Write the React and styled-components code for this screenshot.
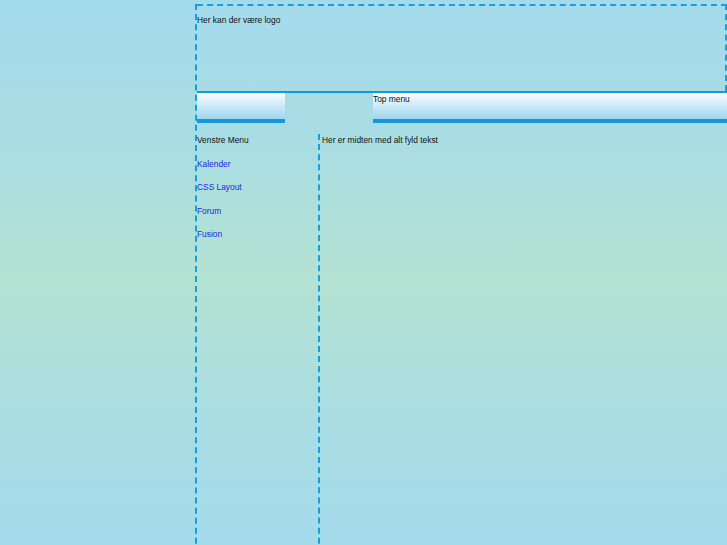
import React from "react";
import styled, { createGlobalStyle } from "styled-components";

const GlobalStyle = createGlobalStyle`
  html, body {
    margin: 0;
    padding: 0;
  }
  body {
    min-height: 545px;
    background: linear-gradient(
      180deg,
      #a4dbec 0%,
      #a9dde3 25%,
      #b4e2d2 50%,
      #a9dde3 75%,
      #a4dbec 100%
    );
    font-family: "Liberation Sans", Arial, sans-serif;
    font-size: 8.4px;
    color: #111;
    overflow: hidden;
  }
`;

const Page = styled.div`
  box-sizing: border-box;
  margin: 4px 0 0 195px;
  width: 532px;
  height: 560px;
  border-left: 2px dashed #14a0dc;
  display: flex;
  flex-direction: column;
`;

const Header = styled.div`
  height: 87px;
  padding: 9px 0 0 0;
  box-sizing: border-box;
  border-top: 2px dashed #14a0dc;
  border-right: 2px dashed #14a0dc;
`;

const MenuBar = styled.div`
  display: flex;
  border-top: 2px solid #1498da;
  height: 30px;
`;

const Tab = styled.div`
  width: ${(p) => p.w || "auto"};
  flex: ${(p) => (p.grow ? 1 : "none")};
  box-sizing: border-box;
  background: linear-gradient(180deg, #ffffff 0%, #d8f0fa 35%, #9fd7ef 100%);
  border-bottom: 4px solid #1498da;
  padding: 1px 0 0 0;
`;

const Gap = styled.div`
  width: 88px;
`;

const Columns = styled.div`
  display: flex;
  flex: 1;
`;

const LeftMenu = styled.div`
  width: 121px;
  padding-top: 12px;
  display: flex;
  flex-direction: column;
  gap: 13.5px;
`;

const MenuLink = styled.a`
  color: #2626e6;
  text-decoration: none;
  line-height: 10px;
`;

const MenuTitle = styled.div`
  line-height: 10px;
`;

const Content = styled.div`
  flex: 1;
  margin-top: 11px;
  border-left: 2px dashed #14a0dc;
  padding: 1px 0 0 2px;
  line-height: 10px;
`;

const links = ["Kalender", "CSS Layout", "Forum", "Fusion"];

export default function App() {
  return (
    <>
      <GlobalStyle />
      <Page>
        <Header>Her kan der være logo</Header>
        <MenuBar>
          <Tab w="88px" />
          <Gap />
          <Tab grow>Top menu</Tab>
        </MenuBar>
        <Columns>
          <LeftMenu>
            <MenuTitle>Venstre Menu</MenuTitle>
            {links.map((l) => (
              <MenuLink key={l} href="#">
                {l}
              </MenuLink>
            ))}
          </LeftMenu>
          <Content>Her er midten med alt fyld tekst</Content>
        </Columns>
      </Page>
    </>
  );
}
